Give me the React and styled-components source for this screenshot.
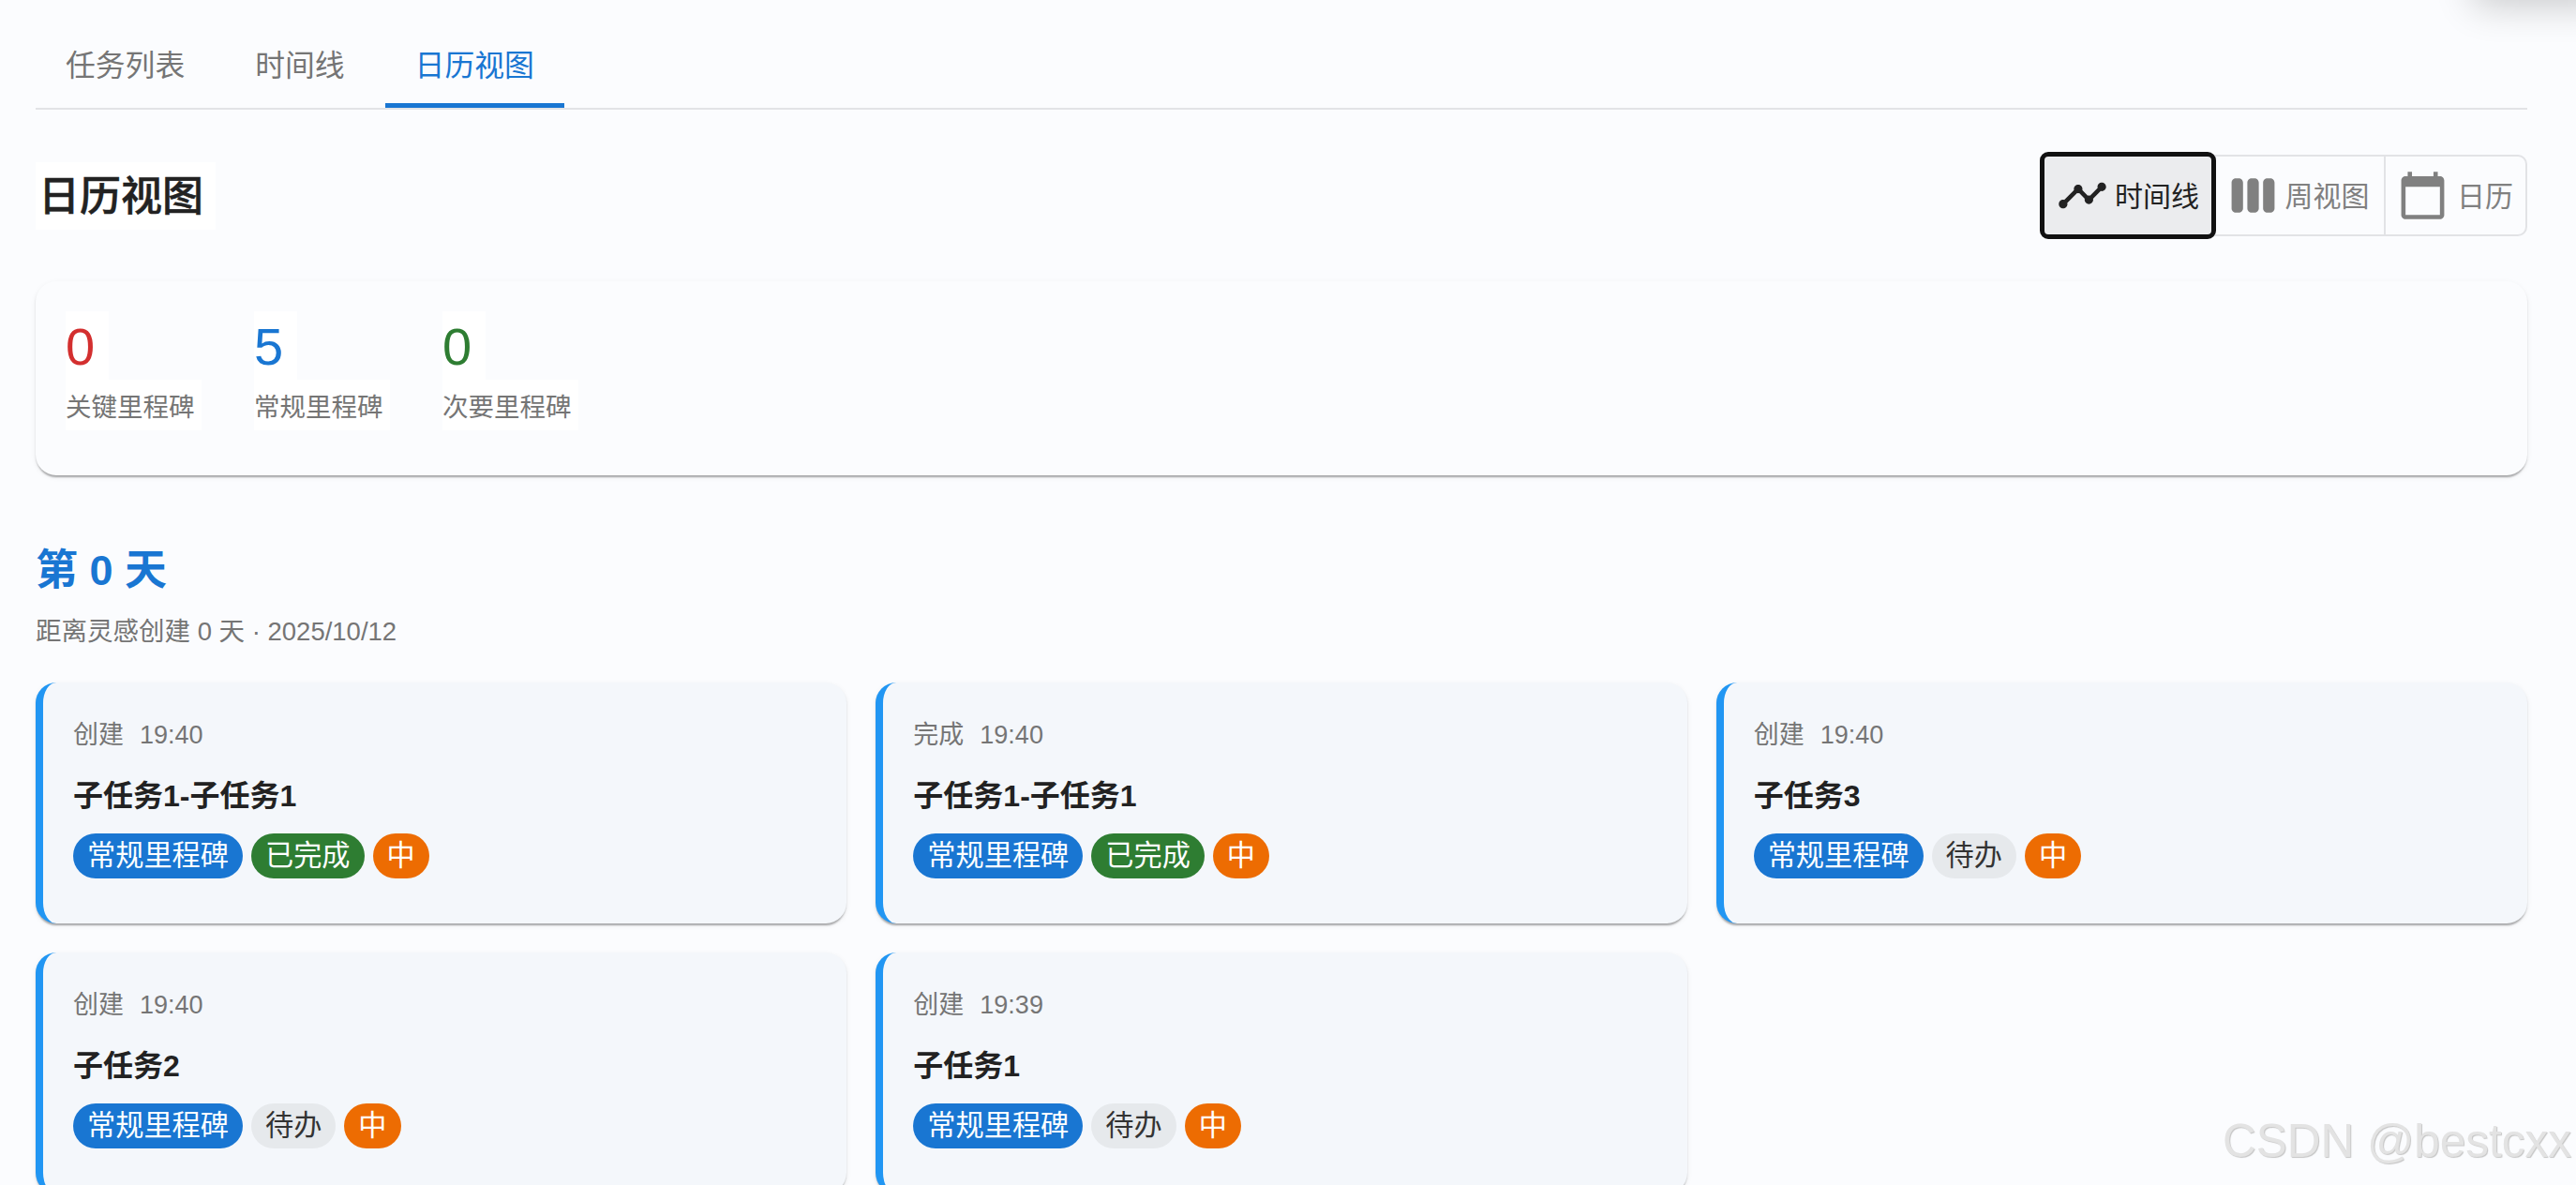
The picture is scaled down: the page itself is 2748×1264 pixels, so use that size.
import React from 'react'
import styled, { createGlobalStyle } from 'styled-components'

const GlobalStyle = createGlobalStyle`
    html, body {
        margin: 0;
        height: 100%;
        overflow: hidden;
        background: #fbfcfe;
    }
    body {
        font-family: "Liberation Sans", "Noto Sans CJK SC", sans-serif;
        color: #222;
    }
`

const TIMELINE = 'M23 8c0 1.1-.9 2-2 2-.18 0-.35-.02-.51-.07l-3.56 3.55c.05.16.07.34.07.52 0 1.1-.9 2-2 2s-2-.9-2-2c0-.18.02-.36.07-.52l-2.55-2.55c-.16.05-.34.07-.52.07s-.36-.02-.52-.07l-4.55 4.56c.05.16.07.33.07.51 0 1.1-.9 2-2 2s-2-.9-2-2 .9-2 2-2c.18 0 .35.02.51.07l4.56-4.55C8.02 9.36 8 9.18 8 9c0-1.1.9-2 2-2s2 .9 2 2c0 .18-.02.36-.07.52l2.55 2.55c.16-.05.34-.07.52-.07s.36.02.52.07l3.55-3.56C19.02 8.35 19 8.18 19 8c0-1.1.9-2 2-2s2 .9 2 2z'
const WEEK = 'M5.33 20H4c-1.1 0-2-.9-2-2V6c0-1.1.9-2 2-2h1.33c1.1 0 2 .9 2 2v12c0 1.1-.9 2-2 2zM22 18V6c0-1.1-.9-2-2-2h-1.33c-1.1 0-2 .9-2 2v12c0 1.1.9 2 2 2H20c1.1 0 2-.9 2-2zm-7.33 0V6c0-1.1-.9-2-2-2h-1.33c-1.1 0-2 .9-2 2v12c0 1.1.9 2 2 2h1.33c1.1 0 2-.9 2-2z'
const CALENDAR = 'M20 3h-1V1h-2v2H7V1H5v2H4c-1.1 0-2 .9-2 2v16c0 1.1.9 2 2 2h16c1.1 0 2-.9 2-2V5c0-1.1-.9-2-2-2zm0 18H4V8h16v13z'

const tabs = [
    { label: '任务列表' },
    { label: '时间线' },
    { label: '日历视图', active: true },
]

const views = [
    { label: '时间线', icon: TIMELINE, active: true, padding: '0 13px 0 12.7px', gap: '7.5px' },
    { label: '周视图', icon: WEEK, padding: '0 15.5px 0 15px', gap: '6.5px' },
    { label: '日历', icon: CALENDAR, padding: '0 13.1px 0 12.4px', gap: '8.5px' },
]

const stats = [
    { value: 0, label: '关键里程碑', color: '#d32f2f' },
    { value: 5, label: '常规里程碑', color: '#1976d2' },
    { value: 0, label: '次要里程碑', color: '#2e7d32' },
]

const DONE = { label: '已完成', kind: 'done' }
const TODO = { label: '待办', kind: 'todo' }

const events = [
    { action: '创建', time: '19:40', title: '子任务1-子任务1', status: DONE },
    { action: '完成', time: '19:40', title: '子任务1-子任务1', status: DONE },
    { action: '创建', time: '19:40', title: '子任务3', status: TODO },
    { action: '创建', time: '19:40', title: '子任务2', status: TODO },
    { action: '创建', time: '19:39', title: '子任务1', status: TODO },
]

const App = () => (
    <Page>
        <GlobalStyle />
        <Smudge />
        <TabBar>
            {tabs.map(tab => (
                <Tab key={tab.label} $active={tab.active}>{tab.label}</Tab>
            ))}
        </TabBar>

        <Header>
            <Title>日历视图</Title>
            <ViewGroup>
                {views.map(view => (
                    <ViewButton key={view.label} $active={view.active} $padding={view.padding} $gap={view.gap}>
                        <svg width='55' height='55' viewBox='0 0 24 24' fill='currentColor'>
                            <path d={view.icon} />
                        </svg>
                        <ViewLabel>{view.label}</ViewLabel>
                    </ViewButton>
                ))}
            </ViewGroup>
        </Header>

        <StatsCard>
            {stats.map(stat => (
                <Stat key={stat.label}>
                    <StatValue $color={stat.color}>{stat.value}</StatValue>
                    <StatLabel>{stat.label}</StatLabel>
                </Stat>
            ))}
        </StatsCard>

        <DayTitle>第 0 天</DayTitle>
        <DayMeta>距离灵感创建 0 天 · 2025/10/12</DayMeta>

        <EventGrid>
            {events.map((event, i) => (
                <EventCard key={i}>
                    <EventMeta>
                        <span>{event.action}</span>
                        <span>{event.time}</span>
                    </EventMeta>
                    <EventTitle>{event.title}</EventTitle>
                    <ChipRow>
                        <Chip $kind='milestone'>常规里程碑</Chip>
                        <Chip $kind={event.status.kind}>{event.status.label}</Chip>
                        <Chip $kind='priority'>中</Chip>
                    </ChipRow>
                </EventCard>
            ))}
        </EventGrid>

        <Watermark>CSDN @bestcxx</Watermark>
    </Page>
)

export default App

const chipColors = {
    milestone: { bg: '#1976d2', fg: '#fff' },
    done: { bg: '#2e7d32', fg: '#fff' },
    todo: { bg: '#e6e9ec', fg: '#333' },
    priority: { bg: '#ed6c02', fg: '#fff' },
}

const Page = styled.div`
    position: relative;
    height: 1264px;
    overflow: hidden;
    box-sizing: border-box;
    padding: 21px 52px 0 38px;
`

const Smudge = styled.div`
    position: absolute;
    top: -60px;
    right: -40px;
    width: 150px;
    height: 60px;
    box-shadow: 0 6px 40px rgba(0, 0, 0, 0.2);
`

const TabBar = styled.div`
    display: flex;
    gap: 11px;
    border-bottom: 2px solid #e2e3e6;
`

const Tab = styled.div`
    box-sizing: border-box;
    height: 94px;
    padding: 0 32px 3px;
    display: flex;
    align-items: center;
    font-size: 31.8px;
    color: ${pr => pr.$active ? '#1976d2' : '#757575'};
    box-shadow: ${pr => pr.$active ? 'inset 0 -5px 0 #1976d2' : 'none'};
`

const Header = styled.div`
    display: flex;
    justify-content: space-between;
    align-items: center;
    margin-top: 48px;
    height: 87px;
`

const Title = styled.div`
    box-sizing: border-box;
    width: 192px;
    height: 72px;
    line-height: 74px;
    padding-left: 3px;
    background: #fff;
    font-size: 44px;
    font-weight: 500;
    -webkit-text-stroke: 0.5px #222;
    color: #222;
`

const ViewGroup = styled.div`
    display: flex;
    height: 87px;
`

const ViewButton = styled.div`
    position: relative;
    z-index: ${pr => pr.$active ? 1 : 0};
    box-sizing: border-box;
    display: flex;
    align-items: center;
    gap: ${pr => pr.$gap};
    padding: ${pr => pr.$padding};
    margin-left: -2px;
    font-size: 30px;
    border: 2px solid #e2e3e6;
    color: ${pr => pr.$active ? '#222' : '#808080'};
    background: ${pr => pr.$active ? '#ebecee' : 'transparent'};
    border-radius: ${pr => pr.$active ? '6px' : '0'};
    outline: ${pr => pr.$active ? '5px solid #111' : 'none'};
    outline-offset: -2px;

    svg {
        display: block;
        flex: none;
    }

    &:last-child {
        border-radius: 0 10px 10px 0;
    }
`

const ViewLabel = styled.span`
    margin-bottom: 3px;
`

const StatsCard = styled.div`
    display: flex;
    gap: 56px;
    box-sizing: border-box;
    height: 207px;
    margin-top: 48px;
    padding: 32px;
    border-radius: 22px;
    background: #fbfcfe;
    box-shadow: 0 4px 2px -2px rgba(0, 0, 0, 0.2), 0 2px 2px 0 rgba(0, 0, 0, 0.14), 0 2px 6px 0 rgba(0, 0, 0, 0.06);
`

const Stat = styled.div`
    display: flex;
    flex-direction: column;
    align-items: flex-start;
`

const StatValue = styled.div`
    width: 46px;
    height: 73px;
    line-height: 75px;
    background: #fff;
    font-size: 56px;
    color: ${pr => pr.$color};
`

const StatLabel = styled.div`
    width: 145px;
    height: 54px;
    line-height: 60px;
    background: #fff;
    font-size: 27.5px;
    color: #757575;
`

const DayTitle = styled.div`
    margin-top: 72px;
    line-height: 60px;
    font-size: 45px;
    font-weight: 700;
    color: #1976d2;
`

const DayMeta = styled.div`
    margin-top: 15px;
    line-height: 40px;
    font-size: 27.5px;
    color: #757575;
`

const EventGrid = styled.div`
    display: grid;
    grid-template-columns: repeat(3, 1fr);
    gap: 31px;
    margin-top: 34px;
`

const EventCard = styled.div`
    box-sizing: border-box;
    height: 257px;
    padding: 36px 32px 0;
    border-left: 8px solid #2196f3;
    border-radius: 22px;
    background: #f4f7fb;
    box-shadow: 0 4px 2px -2px rgba(0, 0, 0, 0.2), 0 2px 2px 0 rgba(0, 0, 0, 0.14), 0 2px 6px 0 rgba(0, 0, 0, 0.06);
`

const EventMeta = styled.div`
    display: flex;
    gap: 17px;
    line-height: 40px;
    font-size: 27px;
    color: #757575;
`

const EventTitle = styled.div`
    margin-top: 23px;
    line-height: 44px;
    font-size: 32px;
    font-weight: 700;
    color: #222;
`

const ChipRow = styled.div`
    display: flex;
    gap: 9px;
    margin-top: 18px;
`

const Chip = styled.div`
    height: 48px;
    line-height: 48px;
    padding: 0 15px;
    border-radius: 24px;
    font-size: 30.2px;
    background: ${pr => chipColors[pr.$kind].bg};
    color: ${pr => chipColors[pr.$kind].fg};
`

const Watermark = styled.div`
    position: absolute;
    right: 5px;
    top: 1189px;
    line-height: 56px;
    font-size: 49.5px;
    color: #e3e3e3;
    text-shadow: 1px 1px 1px #c4c4c4;
`
